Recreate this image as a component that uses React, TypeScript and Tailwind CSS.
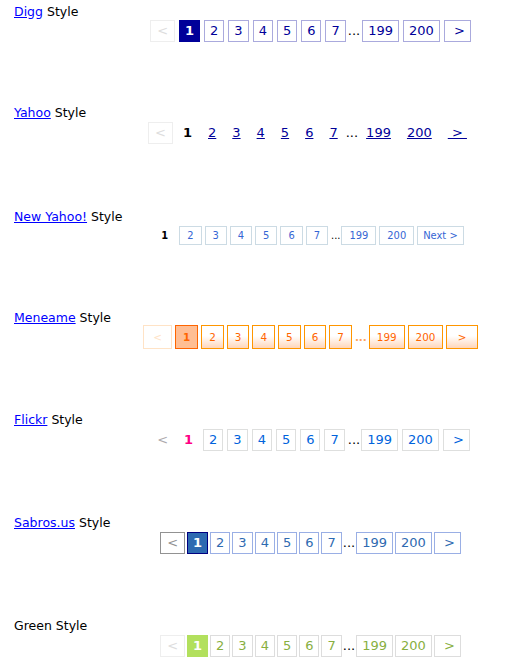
type Skin = {
  row: string;
  prev: string;
  cur: string;
  num: string;
  dots: string;
  next: string;
};

const pages = ["2", "3", "4", "5", "6", "7"];

const digg: Skin = {
  row: "gap-[4px] text-[13px] leading-[16px]",
  prev: "border border-[#eeeeee] px-[6px] py-[2px] text-[#dddddd]",
  cur: "border border-[#000099] bg-[#000099] px-[5px] py-[2px] font-bold text-white",
  num: "border border-[#aaaadd] px-[5px] py-[2px] text-[#000099]",
  dots: "mx-[-2px] text-black",
  next: "border border-[#aaaadd] px-[5px] py-[2px] text-[#000099]",
};

const yahoo: Skin = {
  row: "gap-[4px] text-[13px] leading-[16px]",
  prev: "border border-[#eeeeee] px-[6px] py-[2px] text-[#dddddd]",
  cur: "border border-white px-[5px] py-[2px] font-bold text-black",
  num: "border border-white px-[5px] py-[2px] text-[#000099] underline",
  dots: "mx-[-2px] text-black",
  next: "border border-white px-[5px] py-[2px] text-[#000099] underline",
};

const newYahoo: Skin = {
  row: "gap-[3px] font-['DejaVu_Sans_Condensed','DejaVu_Sans',sans-serif] text-[11px] leading-[13px]",
  prev: "hidden",
  cur: "mr-[4px] px-[4px] py-[2px] font-bold text-black",
  num: "border border-[#ccdbe4] px-[7px] py-[2px] text-[#3666d4]",
  dots: "mr-[-2px] text-[#000000]",
  next: "border border-[#ccdbe4] px-[5px] py-[2px] text-[#3666d4]",
};

const meneame: Skin = {
  row: "gap-[3px] text-[10.4px] leading-[12px]",
  prev: "border border-[#ffe3c6] px-[9px] py-[5px] text-[#ffe3c6]",
  cur: "border border-[#ff6500] bg-[#ffbe94] px-[7px] py-[5px] font-bold text-[#ff6500]",
  num: "border border-[#ff9600] bg-linear-to-b from-white from-45% to-[#ffd6ba] px-[7px] py-[5px] text-[#ff6500]",
  dots: "mr-[-1px] font-bold text-[#ffa35c]",
  next: "border border-[#ff9600] bg-linear-to-b from-white from-45% to-[#ffd6ba] px-[7px] py-[5px] text-[#ff6500]",
};

const flickr: Skin = {
  row: "gap-[4px] text-[13px] leading-[16px]",
  prev: "border border-transparent px-[5px] py-[2px] text-[#adaaad]",
  cur: "border border-transparent px-[5px] py-[2px] font-bold text-[#ff0084]",
  num: "border border-[#dedfde] px-[5px] py-[2px] text-[#0063dc]",
  dots: "ml-[-1px] mr-[-3px] text-black",
  next: "border border-[#dedfde] px-[5px] py-[2px] text-[#0063dc]",
};

const sabros: Skin = {
  row: "gap-[2px] text-[13px] leading-[16px]",
  prev: "border border-[#929292] px-[6px] py-[2px] text-[#929292]",
  cur: "border border-[#000080] bg-[#2e6ab1] px-[5px] py-[2px] font-bold text-white",
  num: "border border-[#9aafe5] px-[5px] py-[2px] text-[#2e6ab1]",
  dots: "mx-[-1px] text-black",
  next: "border border-[#9aafe5] px-[5px] py-[2px] text-[#2e6ab1]",
};

const green: Skin = {
  row: "gap-[2px] text-[13px] leading-[16px]",
  prev: "border border-[#eeeeee] px-[6px] py-[2px] text-[#dddddd]",
  cur: "border border-[#b2e05d] bg-[#b2e05d] px-[5px] py-[2px] font-bold text-white",
  num: "border border-[#dddddd] px-[5px] py-[2px] text-[#88af3f]",
  dots: "mx-[-1px] text-black",
  next: "border border-[#dddddd] px-[5px] py-[2px] text-[#88af3f]",
};

function Pager({ skin, nextText }: { skin: Skin; nextText: string }) {
  return (
    <div className="ml-[112px] flex w-[397px] justify-center">
      <div className={`flex items-center ${skin.row}`}>
        <span className={skin.prev}>&lt;</span>
        <span className={skin.cur}>1</span>
        {pages.map((p) => (
          <a key={p} className={skin.num}>
            {p}
          </a>
        ))}
        <span className={skin.dots}>...</span>
        <a className={skin.num}>199</a>
        <a className={skin.num}>200</a>
        <a className={skin.next}>{nextText}</a>
      </div>
    </div>
  );
}

function Label({ link, text }: { link?: string; text: string }) {
  return (
    <div className="h-[15px] pl-[14px] text-[12.5px] leading-[15px] text-black">
      {link && <a className="cursor-pointer text-[#0000ff] underline">{link}</a>}
      {link ? " " : ""}
      {text}
    </div>
  );
}

export default function App() {
  return (
    <div className="h-[661px] w-[509px] overflow-hidden bg-white pt-[4px] font-['DejaVu_Sans',sans-serif]">
      <section className="h-[101px]">
        <Label link="Digg" text="Style" />
        <div className="mt-[1px]">
          <Pager skin={digg} nextText={"\u00a0>"} />
        </div>
      </section>

      <section className="h-[104px]">
        <Label link="Yahoo" text="Style" />
        <div className="mt-[2px]">
          <Pager skin={yahoo} nextText={"\u00a0>\u00a0"} />
        </div>
      </section>

      <section className="h-[101px]">
        <Label link="New Yahoo!" text="Style" />
        <div className="mt-[2px]">
          <Pager skin={newYahoo} nextText="Next >" />
        </div>
      </section>

      <section className="h-[102px]">
        <Label link="Meneame" text="Style" />
        <div className="mt-[0px]">
          <Pager skin={meneame} nextText={"\u00a0>\u00a0"} />
        </div>
      </section>

      <section className="h-[103px]">
        <Label link="Flickr" text="Style" />
        <div className="mt-[2px]">
          <Pager skin={flickr} nextText={"\u00a0>"} />
        </div>
      </section>

      <section className="h-[103px]">
        <Label link="Sabros.us" text="Style" />
        <div className="mt-[2px]">
          <Pager skin={sabros} nextText={"\u00a0>"} />
        </div>
      </section>

      <section className="h-[103px]">
        <Label text="Green Style" />
        <div className="mt-[2px]">
          <Pager skin={green} nextText={"\u00a0>"} />
        </div>
      </section>
    </div>
  );
}
